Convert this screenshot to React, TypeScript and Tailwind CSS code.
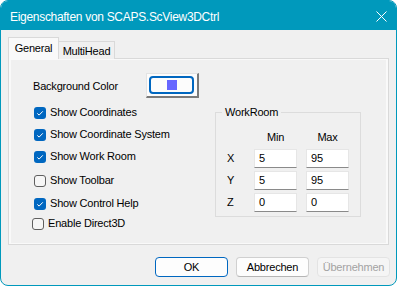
import React from "react";

function Check({ checked }: { checked: boolean }) {
  if (checked) {
    return (
      <span className="w-[12px] h-[12px] rounded-[3px] bg-[#0067c0] flex items-center justify-center shrink-0">
        <svg width="12" height="12" viewBox="0 0 12 12">
          <path d="M3.3 6.4 L5.1 8.1 L8.8 4.3" fill="none" stroke="#ffffff" strokeWidth="1" />
        </svg>
      </span>
    );
  }
  return <span className="w-[12px] h-[12px] rounded-[3px] border border-[#5f5f5f] bg-[#f6f6f6] shrink-0" />;
}

function CheckRow({ label, checked, className }: { label: string; checked: boolean; className?: string }) {
  return (
    <div className={"flex items-center h-[13px] gap-[4px] " + (className ?? "")}>
      <Check checked={checked} />
      <span className="leading-[13px]">{label}</span>
    </div>
  );
}

function Field({ value }: { value: string }) {
  return (
    <div className="w-[43px] h-[19px] bg-white border border-[#e6e6e6] border-b-[#8a8a8a] pl-[4px] flex items-center leading-[13px]">
      {value}
    </div>
  );
}

function FieldRow({ axis, min, max, className }: { axis: string; min: string; max: string; className?: string }) {
  return (
    <div className={"flex items-center " + (className ?? "")}>
      <span className="w-[27px] leading-[13px]">{axis}</span>
      <Field value={min} />
      <div className="w-[9px]" />
      <Field value={max} />
    </div>
  );
}

export default function App() {
  return (
    <div className="w-[397px] h-[286px] bg-white font-['Liberation_Sans',Arial,sans-serif] text-[11px] tracking-[-0.2px] text-black">
      <div className="w-full h-full rounded-[8px] border border-[#0099bc] overflow-hidden flex flex-col bg-[#f0f0f0]">
        {/* Title bar */}
        <div className="h-[29px] bg-[#0099bc] flex items-center justify-between pl-[9px] pr-[9px] shrink-0">
          <span className="text-white text-[12px] tracking-[-0.3px] leading-[14px] mt-[2px]">
            Eigenschaften von SCAPS.ScView3DCtrl
          </span>
          <svg width="11" height="11" viewBox="0 0 11 11" className="mt-[1px]">
            <path d="M0.5 0.5 L10.5 10.5 M10.5 0.5 L0.5 10.5" stroke="#ffffff" strokeWidth="1" />
          </svg>
        </div>

        {/* Body */}
        <div className="flex-1 flex flex-col pl-[7px] pr-[6px] pt-[7px]">
          {/* Tabs */}
          <div className="flex items-end h-[22px] relative z-10">
            <div className="w-[51px] h-[22px] bg-[#f9f9f9] border border-b-0 border-[#d9d9d9] flex items-center justify-center pb-[1px]">
              General
            </div>
            <div className="w-[56px] h-[18px] bg-[#f0f0f0] border border-l-0 border-b-0 border-[#d9d9d9] flex items-center justify-center pt-[1px]">
              MultiHead
            </div>
          </div>

          {/* Panel */}
          <div className="w-[381px] h-[187px] -mt-[1px] border border-[#d9d9d9] bg-[#f9f9f9] px-[2px] pt-[1px] pb-[1px]">
            <div className="w-full h-full bg-[#f0f0f0] pl-[21px] pt-[13px] flex flex-col">
              {/* Background color row */}
              <div className="flex items-center h-[25px]">
                <span className="w-[114px] pl-[1px] leading-[13px] mt-[1px]">Background Color</span>
                <div className="w-[53px] h-[25px] border-t border-l border-[#e3e3e3] border-r-2 border-b-2 border-r-[#7a7a7a] border-b-[#7a7a7a] bg-[#fcfcfc] flex items-center justify-center">
                  <div className="w-[45px] h-[18px] rounded-[4px] border-2 border-[#0067c0] flex items-center justify-center -ml-[1px]">
                    <div className="w-[10px] h-[10px] bg-[#6666ff]" />
                  </div>
                </div>
              </div>

              <div className="flex">
                {/* Checkbox column */}
                <div className="w-[183px] flex flex-col pt-[8px]">
                  <CheckRow className="ml-[2px]" label="Show Coordinates" checked />
                  <CheckRow className="ml-[2px] mt-[9px]" label="Show Coordinate System" checked />
                  <CheckRow className="ml-[2px] mt-[9px]" label="Show Work Room" checked />
                  <CheckRow className="ml-[2px] mt-[11px]" label="Show Toolbar" checked={false} />
                  <CheckRow className="ml-[2px] mt-[10px]" label="Show Control Help" checked />
                  <CheckRow className="mt-[7px]" label="Enable Direct3D" checked={false} />
                </div>

                {/* WorkRoom group */}
                <div className="mt-[14px] w-[146px] h-[105px] border border-[#dcdcdc] relative pl-[11px] pt-[18px]">
                  <span className="absolute -top-[7px] left-[6px] px-[3px] bg-[#f0f0f0] leading-[13px]">WorkRoom</span>
                  <div className="flex h-[13px] leading-[13px]">
                    <span className="w-[27px]" />
                    <span className="w-[43px] text-center">Min</span>
                    <span className="w-[9px]" />
                    <span className="w-[43px] text-center">Max</span>
                  </div>
                  <FieldRow className="mt-[5px]" axis="X" min="5" max="95" />
                  <FieldRow className="mt-[3px]" axis="Y" min="5" max="95" />
                  <FieldRow className="mt-[3px]" axis="Z" min="0" max="0" />
                </div>
              </div>
            </div>
          </div>

          {/* Buttons */}
          <div className="flex justify-end mt-[12px] gap-[8px]">
            <div className="w-[73px] h-[20px] rounded-[4px] border border-[#0067c0] bg-[#fdfdfd] flex items-center justify-center leading-[13px]">
              OK
            </div>
            <div className="w-[73px] h-[20px] rounded-[4px] border border-[#d0d0d0] border-b-[#b5b5b5] bg-[#fdfdfd] flex items-center justify-center leading-[13px]">
              Abbrechen
            </div>
            <div className="w-[73px] h-[20px] rounded-[4px] border border-[#e3e3e3] bg-[#f5f5f5] text-[#a3a3a3] flex items-center justify-center leading-[13px]">
              Übernehmen
            </div>
          </div>
        </div>
      </div>
    </div>
  );
}
